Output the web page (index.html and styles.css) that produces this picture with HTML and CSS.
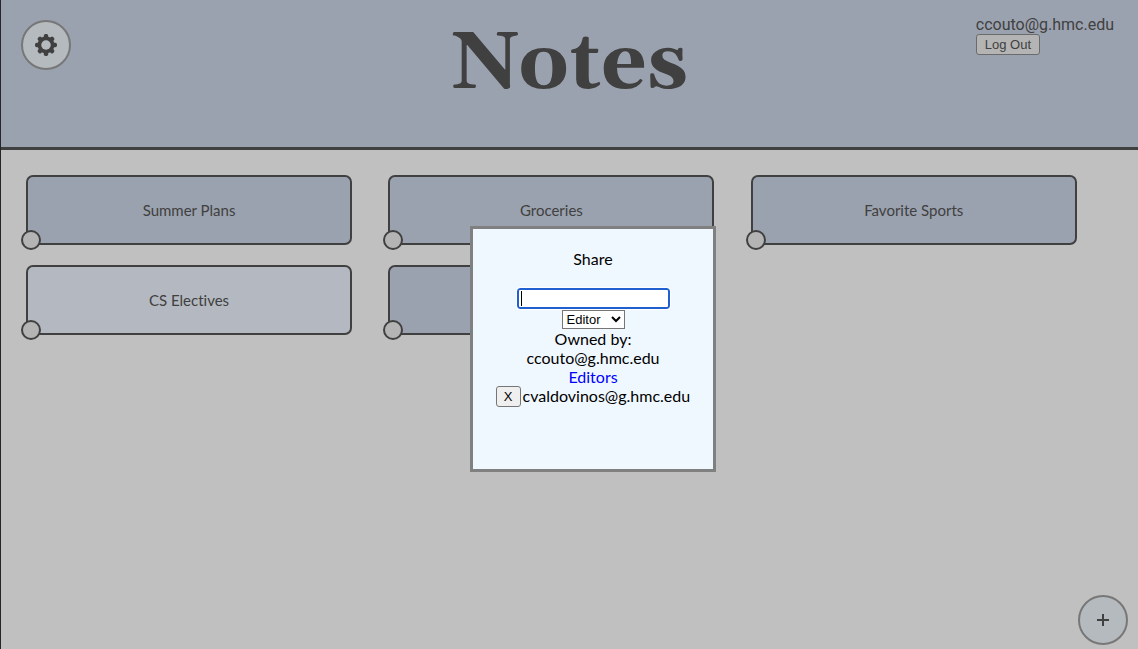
FILE: index.html
```html
<!DOCTYPE html>
<html lang="en">
<head>
<meta charset="utf-8">
<meta name="viewport" content="width=device-width, initial-scale=1">
<title>Notes</title>
<link rel="stylesheet" href="styles.css">
</head>
<body>
<div class="app">
  <header class="header">
    <div class="header-side">
      <button class="round-button" type="button" aria-label="Settings">
        <svg class="gear" viewBox="0 0 24 24" aria-hidden="true">
          <g fill="currentColor">
            <rect x="9.6" y="0" width="4.8" height="24" rx="1.8"/>
            <rect x="9.6" y="0.4" width="4.8" height="23.2" rx="1.8" transform="rotate(45 12 12)"/>
            <rect x="9.6" y="0" width="4.8" height="24" rx="1.8" transform="rotate(90 12 12)"/>
            <rect x="9.6" y="0.4" width="4.8" height="23.2" rx="1.8" transform="rotate(135 12 12)"/>
            <circle cx="12" cy="12" r="9.2"/>
          </g>
          <circle class="gear-hole" cx="12" cy="12" r="5.2"/>
        </svg>
      </button>
    </div>
    <h1 class="title">Notes</h1>
    <div class="header-side header-side-end">
      <div class="account">
        <span class="account-email">ccouto@g.hmc.edu</span>
        <button class="small-button logout" type="button">Log Out</button>
      </div>
    </div>
  </header>
  <main class="notes">
    <article class="note">Summer Plans<button class="note-dot" type="button" aria-label="Select Summer Plans"></button></article>
    <article class="note">Groceries<button class="note-dot" type="button" aria-label="Select Groceries"></button></article>
    <article class="note">Favorite Sports<button class="note-dot" type="button" aria-label="Select Favorite Sports"></button></article>
    <article class="note note-light">CS Electives<button class="note-dot" type="button" aria-label="Select CS Electives"></button></article>
    <article class="note"><button class="note-dot" type="button" aria-label="Select note"></button></article>
  </main>
  <button class="round-button add-button" type="button" aria-label="Add note">
    <svg class="plus" viewBox="0 0 12 12" aria-hidden="true"><path d="M6 0v12M0 6h12" stroke="currentColor" stroke-width="2"/></svg>
  </button>
</div>
<section class="dialog" role="dialog" aria-labelledby="share-title">
  <h2 class="dialog-title" id="share-title">Share</h2>
  <input class="share-input" type="email" aria-label="Email to share with" autofocus>
  <select class="role-select" aria-label="Role"><option>Editor</option><option>Viewer</option></select>
  <div>Owned by:</div>
  <div>ccouto@g.hmc.edu</div>
  <div class="editors">Editors</div>
  <div class="editor-row"><button class="small-button" type="button" aria-label="Remove cvaldovinos@g.hmc.edu">X</button><span>cvaldovinos@g.hmc.edu</span></div>
</section>
</body>
</html>
```
FILE: styles.css
```css
* { box-sizing: border-box; }

body {
  margin: 0;
  background: #c0c0c0;
  color: #404040;
  font: 16px/19px "Trebuchet MS", Lato, sans-serif;
  font-variant-ligatures: none;
}

button, input, select { font: 13px/15px "Liberation Sans", Arial, sans-serif; color: inherit; }

.app { min-height: 100vh; border-left: 1px solid #262626; }

.header {
  display: flex;
  min-height: 150px;
  padding: 15px 20px;
  background: #9ba2af;
  border-bottom: 3px solid #404040;
}

.header-side { flex: 1; padding-top: 5px; }
.header-side-end { display: flex; justify-content: flex-end; padding-top: 0; }

.title {
  margin: 0;
  font: bold 80px/100px Georgia, Gelasio, "DejaVu Serif", serif;
}

.round-button {
  display: flex;
  align-items: center;
  justify-content: center;
  width: 50px;
  height: 50px;
  padding: 0;
  border: 2px solid #777;
  border-radius: 50%;
  background: #b5babf;
  color: #404040;
}

.gear { width: 22px; height: 22px; }
.gear-hole { fill: #b5babf; }
.plus { width: 12px; height: 12px; }

.account { padding-right: 4px; font-family: Roboto, sans-serif; }
.account-email { display: block; }

.small-button {
  height: 21px;
  padding: 0 7px;
  border: 1px solid #767676;
  border-radius: 3px;
  background: #efefef;
}

.logout { display: block; padding: 0 8px; background: #b4b4b4; border-color: #6b6b6b; }

.notes {
  display: grid;
  grid-template-columns: repeat(3, 1fr);
  row-gap: 20px;
  padding: 25px;
}

.note {
  position: relative;
  display: flex;
  align-items: center;
  justify-content: center;
  width: 90%;
  height: 70px;
  border: 2px solid #404040;
  border-radius: 7px;
  background: #9ba2af;
  font-size: 15px;
}

.note-light { background: #b4b9c1; }

.note-dot {
  position: absolute;
  left: -7px;
  bottom: -7px;
  width: 20px;
  height: 20px;
  padding: 0;
  border: 2px solid #404040;
  border-radius: 50%;
  background: #b4b4b4;
}

.add-button { position: fixed; right: 10px; bottom: 4px; }

.dialog {
  position: fixed;
  top: 226px;
  left: calc(50% - 99px);
  display: flex;
  flex-direction: column;
  align-items: center;
  width: 246px;
  min-height: 246px;
  padding: 20px 10px;
  border: 3px solid #808080;
  background: #f0f8ff;
  color: #000;
}

.dialog-title { margin: 0 0 20px; font: inherit; }

.share-input {
  width: 153px;
  height: 21px;
  margin-bottom: 1px;
  padding: 1px 2px;
  border: 2px solid #1f5fd0;
  border-radius: 3px;
  outline: 1px solid #fff;
  background: linear-gradient(#000, #000) 2px center / 1px 15px no-repeat #fff;
  caret-color: transparent;
}

.role-select {
  height: 19px;
  width: 63px;
  padding: 0;
  border: 1px solid #767676;
  border-radius: 0;
  background: #fff;
}

.editors { color: #00f; }
.editor-row { display: flex; gap: 2px; }
```
